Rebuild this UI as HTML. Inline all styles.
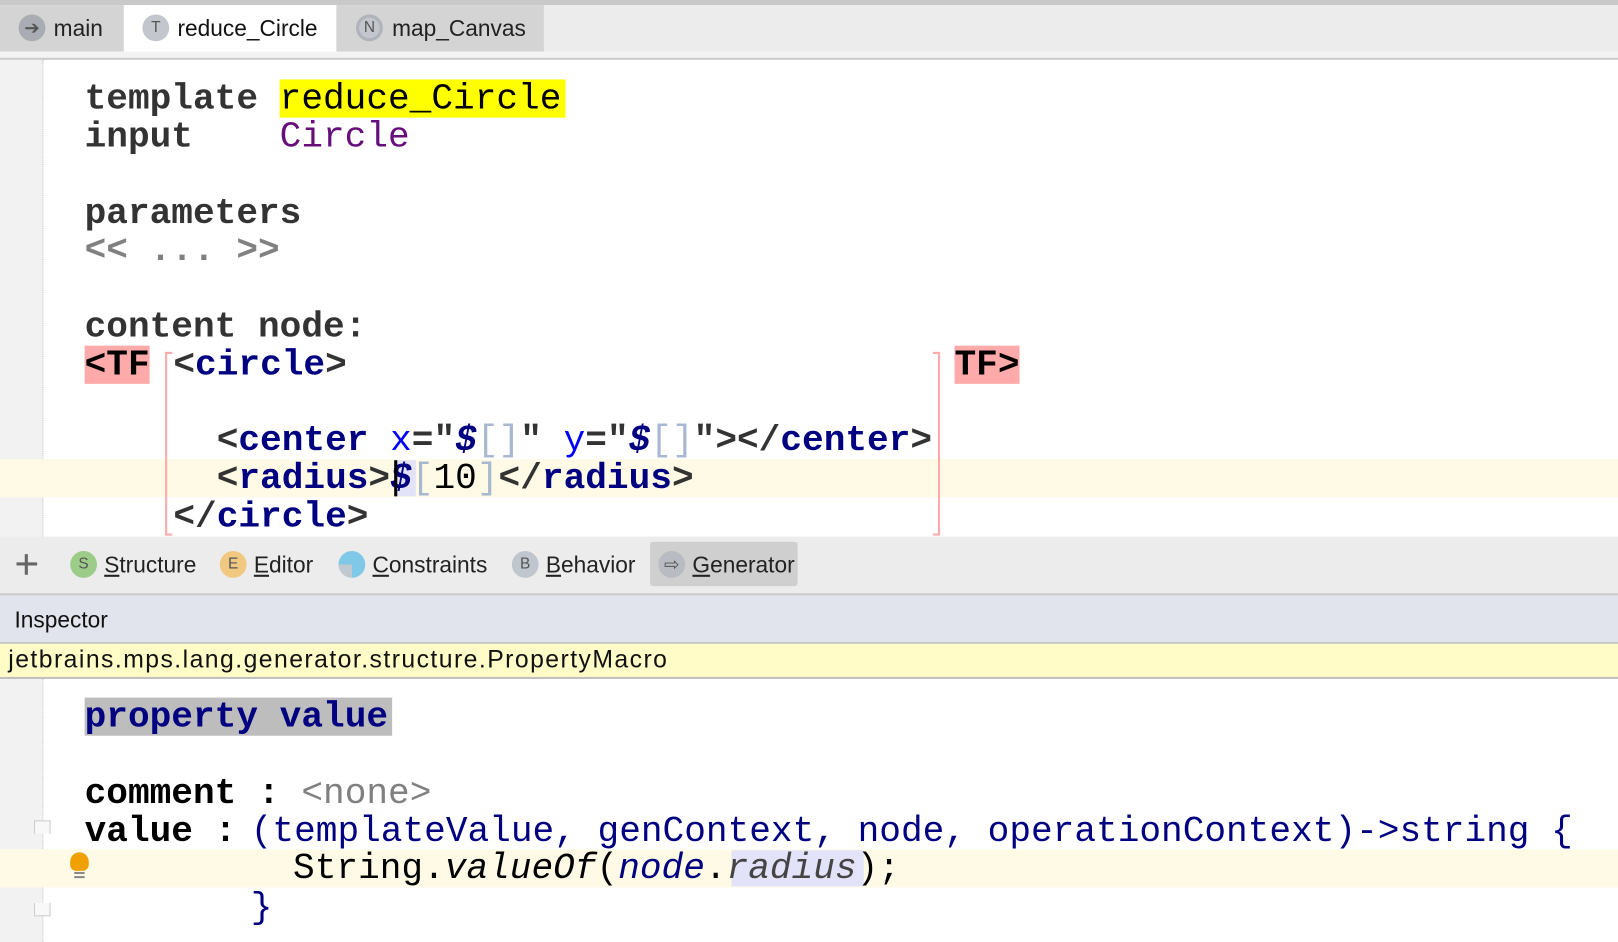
<!DOCTYPE html>
<html><head><meta charset="utf-8"><style>
html,body{margin:0;padding:0;background:#fff;overflow:hidden;width:1618px;height:942px}
#w{position:absolute;left:0;top:0;width:1568px;height:913px;transform:scale(1.0319);transform-origin:0 0}
.a{position:absolute}
.c{position:absolute;font-family:"Liberation Mono",monospace;font-size:35px;line-height:37px;height:37px;white-space:pre;margin-top:2px}
.b{font-weight:bold}
.k{color:#333;font-weight:bold}
.n{color:#000080;font-weight:bold}
.u{font-family:"Liberation Sans",sans-serif;font-size:22px;color:#222;white-space:pre}
.ic{position:absolute;width:26px;height:26px;border-radius:13px;font-family:"Liberation Sans",sans-serif;font-size:15px;text-align:center;line-height:26px;color:#555}
</style></head><body><div id="w">
<div class="a" style="left:0;top:0;width:1568px;height:5px;background:#c9c9c9"></div>
<div class="a" style="left:0;top:5px;width:1568px;height:45px;background:#ececec"></div>
<div class="a" style="left:0;top:5px;width:120px;height:45px;background:#d4d4d4"></div>
<div class="a" style="left:120px;top:5px;width:206px;height:46px;background:#fff"></div>
<div class="a" style="left:326px;top:5px;width:201px;height:45px;background:#d4d4d4"></div>
<div class="a" style="left:0;top:50px;width:1568px;height:6px;background:#f3f3f3"></div>
<div class="a" style="left:0;top:56px;width:1568px;height:2px;background:#cacaca"></div>
<div class="ic" style="left:18px;top:14px;background:#a9adb3;color:#555;font-size:18px">➔</div>
<div class="a u" style="left:52px;top:15px">main</div>
<div class="ic" style="left:138px;top:14px;background:#c3c7cd">T</div>
<div class="a u" style="left:172px;top:15px;color:#111">reduce_Circle</div>
<div class="ic" style="left:345px;top:14px;background:#c3c7cd;box-shadow:inset 0 0 0 3px #b0b4ba">N</div>
<div class="a u" style="left:380px;top:15px">map_Canvas</div>
<div class="a" style="left:0;top:58px;width:41px;height:462px;background:#f2f2f2;border-right:1px dotted #c8c8c8"></div>
<div class="a" style="left:0;top:445px;width:1568px;height:37px;background:#fefae6"></div>
<div class="a" style="left:271px;top:77px;width:277px;height:37px;background:#ffff00"></div>
<div class="c k" style="left:82px;top:76px">template</div>
<div class="c" style="left:271px;top:76px;color:#000">reduce_Circle</div>
<div class="c k" style="left:82px;top:113px">input</div>
<div class="c" style="left:271px;top:113px;color:#660e7a">Circle</div>
<div class="c k" style="left:82px;top:187px">parameters</div>
<div class="c b" style="left:82px;top:223px;color:#808080">&lt;&lt; ... &gt;&gt;</div>
<div class="c k" style="left:82px;top:297px">content node:</div>
<div class="a" style="left:82px;top:335px;width:63px;height:37px;background:#ffaaaa"></div>
<div class="c b" style="left:82px;top:334px;color:#000">&lt;TF</div>
<div class="a" style="left:160px;top:341px;width:5px;height:174px;border:2px solid #ffaaaa;border-right:none"></div>
<div class="c" style="left:168px;top:334px"><span class="k">&lt;</span><span class="n">circle</span><span class="k">&gt;</span></div>
<div class="a" style="left:904px;top:341px;width:5px;height:174px;border:2px solid #ffaaaa;border-left:none"></div>
<div class="a" style="left:925px;top:335px;width:63px;height:37px;background:#ffaaaa"></div>
<div class="c b" style="left:925px;top:334px;color:#000">TF&gt;</div>
<div class="c" style="left:210px;top:407px"><span class="k">&lt;</span><span class="n">center</span> <span style="color:#0000ff">x</span><span class="k">=&quot;</span><span class="n" style="font-style:italic">$</span><span style="color:#a8b8d0">[]</span><span class="k">&quot;</span> <span style="color:#0000ff">y</span><span class="k">=&quot;</span><span class="n" style="font-style:italic">$</span><span style="color:#a8b8d0">[]</span><span class="k">&quot;&gt;&lt;/</span><span class="n">center</span><span class="k">&gt;</span></div>
<div class="a" style="left:383px;top:446px;width:20px;height:35px;background:#e2e2f8"></div>
<div class="c" style="left:210px;top:444px"><span class="k">&lt;</span><span class="n">radius</span><span class="k">&gt;</span><span class="n" style="font-style:italic">$</span><span style="color:#a8b8d0">[</span><span style="color:#000">10</span><span style="color:#a8b8d0">]</span><span class="k">&lt;/</span><span class="n">radius</span><span class="k">&gt;</span></div>
<div class="a" style="left:382px;top:446px;width:3px;height:35px;background:#000"></div>
<div class="c" style="left:168px;top:481px"><span class="k">&lt;/</span><span class="n">circle</span><span class="k">&gt;</span></div>
<div class="a" style="left:0;top:520px;width:1568px;height:55px;background:#ececec;border-bottom:2px solid #c8c8c8"></div>
<div class="a" style="left:16px;top:545px;width:20px;height:3px;background:#666"></div>
<div class="a" style="left:24px;top:537px;width:3px;height:20px;background:#666"></div>
<div class="ic" style="left:68px;top:534px;background:#9ccc88">S</div>
<div class="a u" style="left:101px;top:535px"><u>S</u>tructure</div>
<div class="ic" style="left:213px;top:534px;background:#f0c880">E</div>
<div class="a u" style="left:246px;top:535px"><u>E</u>ditor</div>
<div class="ic" style="left:328px;top:534px;background:linear-gradient(180deg,#80c8e8 50%,transparent 50%),linear-gradient(90deg,#c0c8d0 50%,#80c8e8 50%)"></div>
<div class="a u" style="left:361px;top:535px"><u>C</u>onstraints</div>
<div class="ic" style="left:496px;top:534px;background:#c0c6ce">B</div>
<div class="a u" style="left:529px;top:535px"><u>B</u>ehavior</div>
<div class="a" style="left:630px;top:525px;width:143px;height:43px;background:#cfcfcf;border-radius:3px"></div>
<div class="ic" style="left:638px;top:534px;background:#b8bcc2;font-size:18px">⇨</div>
<div class="a u" style="left:671px;top:535px"><u>G</u>enerator</div>
<div class="a" style="left:0;top:577px;width:1568px;height:45px;background:#e1e4ec;border-bottom:2px solid #c8c8c8"></div>
<div class="a u" style="left:14px;top:588px;color:#111">Inspector</div>
<div class="a" style="left:0;top:624px;width:1568px;height:32px;background:#fffcc8;border-bottom:2px solid #c0c0c0"></div>
<div class="a u" style="left:8px;top:626px;color:#111;font-size:24px;letter-spacing:1.4px">jetbrains.mps.lang.generator.structure.PropertyMacro</div>
<div class="a" style="left:0;top:658px;width:41px;height:255px;background:#f2f2f2;border-right:1px dotted #c8c8c8"></div>
<div class="a" style="left:0;top:823px;width:1568px;height:37px;background:#fefae6"></div>
<div class="a" style="left:82px;top:676px;width:298px;height:37px;background:#bdbdbd"></div>
<div class="c n" style="left:82px;top:675px">property value</div>
<div class="c b" style="left:82px;top:749px;color:#000">comment : <span style="font-weight:normal;color:#808080">&lt;none&gt;</span></div>
<div class="c b" style="left:82px;top:786px;color:#000">value :</div>
<div class="c" style="left:243px;top:786px;color:#000080">(templateValue, genContext, node, operationContext)-&gt;string {</div>
<div class="a" style="left:709px;top:824px;width:128px;height:35px;background:#e2e2f8"></div>
<div class="c" style="left:284px;top:822px;color:#000">String.<i>valueOf</i>(<i style="color:#000080">node</i>.<i style="color:#444">radius</i>);</div>
<div class="c" style="left:243px;top:860px;color:#000080">}</div>
<div class="a" style="left:68px;top:826px;width:18px;height:18px;border-radius:9px 9px 6px 6px;background:#f0a000"></div>
<div class="a" style="left:72px;top:845px;width:10px;height:2px;background:#888"></div>
<div class="a" style="left:72px;top:849px;width:10px;height:2px;background:#888"></div>
<div class="a" style="left:33px;top:795px;width:14px;height:12px;border:1px solid #ccc;border-bottom:none;background:#f8f8f8"></div>
<div class="a" style="left:33px;top:875px;width:14px;height:12px;border:1px solid #ccc;border-top:none;background:#f8f8f8"></div>
</div></body></html>
